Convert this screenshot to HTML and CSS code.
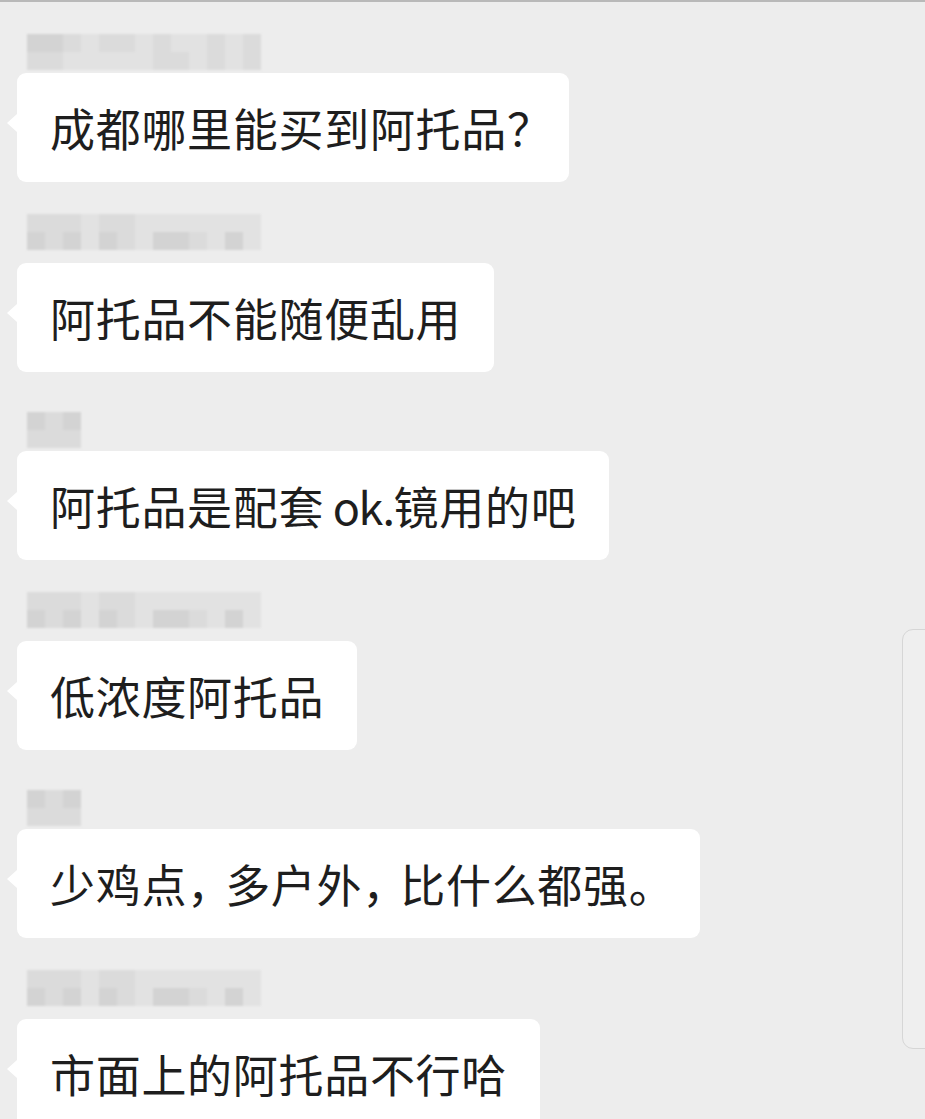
FILE: index.html
```html
<!DOCTYPE html>
<html lang="zh-CN">
<head>
  <meta charset="UTF-8">
  <title>聊天记录</title>
  <link rel="stylesheet" href="styles.css">
</head>
<body>

  <div class="chat">

    <div class="msg">
      <div class="name wide">
        <span class="d2"></span><span class="d2"></span><span class="d3"></span><span class="d4"></span><span class="d3"></span><span class="d3"></span><span class="d4"></span><span class="d3"></span><span class="d4"></span><span class="d4"></span><span class="d3"></span><span class="d4"></span><span class="d3"></span>
        <span class="d3"></span><span class="d3"></span><span class="d4"></span><span class="d4"></span><span class="d4"></span><span class="d4"></span><span class="d4"></span><span class="d3"></span><span class="d3"></span><span class="d4"></span><span class="d3"></span><span class="d4"></span><span class="d3"></span>
      </div>
      <div class="bubble">成都哪里能买到阿托品<span class="q">？</span></div>
    </div>

    <div class="msg">
      <div class="name wide">
        <span class="d3"></span><span class="d3"></span><span class="d3"></span><span class="d4"></span><span class="d3"></span><span class="d3"></span><span class="d4"></span><span class="d4"></span><span class="d4"></span><span class="d4"></span><span class="d4"></span><span class="d4"></span><span class="d4"></span>
        <span class="d2"></span><span class="d3"></span><span class="d2"></span><span class="d4"></span><span class="d2"></span><span class="d3"></span><span class="d4"></span><span class="d2"></span><span class="d2"></span><span class="d3"></span><span class="d4"></span><span class="d2"></span><span class="d4"></span>
      </div>
      <div class="bubble">阿托品不能随便乱用</div>
    </div>

    <div class="msg">
      <div class="name short">
        <span class="d2"></span><span class="d3"></span><span class="d2"></span>
        <span class="d3"></span><span class="d3"></span><span class="d3"></span>
      </div>
      <div class="bubble">阿托品是配套<span class="latin"> ok.</span>镜用的吧</div>
    </div>

    <div class="msg">
      <div class="name wide">
        <span class="d3"></span><span class="d3"></span><span class="d3"></span><span class="d4"></span><span class="d3"></span><span class="d3"></span><span class="d4"></span><span class="d4"></span><span class="d4"></span><span class="d4"></span><span class="d4"></span><span class="d4"></span><span class="d4"></span>
        <span class="d2"></span><span class="d3"></span><span class="d2"></span><span class="d4"></span><span class="d2"></span><span class="d3"></span><span class="d4"></span><span class="d2"></span><span class="d2"></span><span class="d3"></span><span class="d4"></span><span class="d2"></span><span class="d4"></span>
      </div>
      <div class="bubble">低浓度阿托品</div>
    </div>

    <div class="msg">
      <div class="name short">
        <span class="d2"></span><span class="d3"></span><span class="d2"></span>
        <span class="d3"></span><span class="d3"></span><span class="d3"></span>
      </div>
      <div class="bubble">少鸡点<span class="p">，</span>多户外<span class="p">，</span>比什么都强<span class="p">。</span></div>
    </div>

    <div class="msg">
      <div class="name wide">
        <span class="d3"></span><span class="d3"></span><span class="d3"></span><span class="d4"></span><span class="d3"></span><span class="d3"></span><span class="d4"></span><span class="d4"></span><span class="d4"></span><span class="d4"></span><span class="d4"></span><span class="d4"></span><span class="d4"></span>
        <span class="d2"></span><span class="d3"></span><span class="d2"></span><span class="d4"></span><span class="d2"></span><span class="d3"></span><span class="d4"></span><span class="d2"></span><span class="d2"></span><span class="d3"></span><span class="d4"></span><span class="d2"></span><span class="d4"></span>
      </div>
      <div class="bubble">市面上的阿托品不行哈</div>
    </div>

  </div>

  <!-- side panel peeking in from the right edge -->
  <div class="side-panel"></div>

</body>
</html>
```

FILE: styles.css
```css
html, body { height: 100%; }
body { margin: 0; background: #ededed; border-top: 2px solid #b9b9b9; box-sizing: border-box; overflow: hidden; font-family: "Noto Sans CJK SC", "Noto Sans", sans-serif; color: #1e1e1e; position: relative; }

.chat { display: flex; flex-direction: column; padding-left: 17px; }

.msg { display: flex; flex-direction: column; align-items: flex-start; padding-top: 32px; }
.msg:nth-child(odd) { padding-top: 40px; }
.msg:first-child { padding-top: 32px; }

/* pixelated (blurred out) sender names */
.name { display: grid; grid-auto-rows: 18px; margin-left: 10px; margin-bottom: 13px; filter: blur(0.8px); }
.msg:nth-child(odd) .name { margin-bottom: 3px; }
.name.wide { grid-template-columns: repeat(13, 18px); }
.name.short { grid-template-columns: repeat(3, 18px); }
.name span { display: block; }
.d2 { background: #d3d3d3; }
.d3 { background: #dbdbdb; }
.d4 { background: #e2e2e2; }

.bubble { position: relative; background: #fff; border-radius: 9px; padding: 27px 33px; font-size: 45px; line-height: 55px; letter-spacing: 0.7px; white-space: nowrap; }
.bubble::before { content: ""; position: absolute; left: -10px; top: 41px; border-style: solid; border-width: 9px 10px 9px 0; border-color: transparent #fff transparent transparent; }
.bubble .q { letter-spacing: -16px; }
.bubble .latin { letter-spacing: -1.5px; }
.bubble .p { letter-spacing: -7px; }

.side-panel { position: absolute; right: -20px; top: 627px; width: 41px; height: 418px; border: 1px solid #d6d6d6; border-radius: 11px; background: #efefef; }
```
